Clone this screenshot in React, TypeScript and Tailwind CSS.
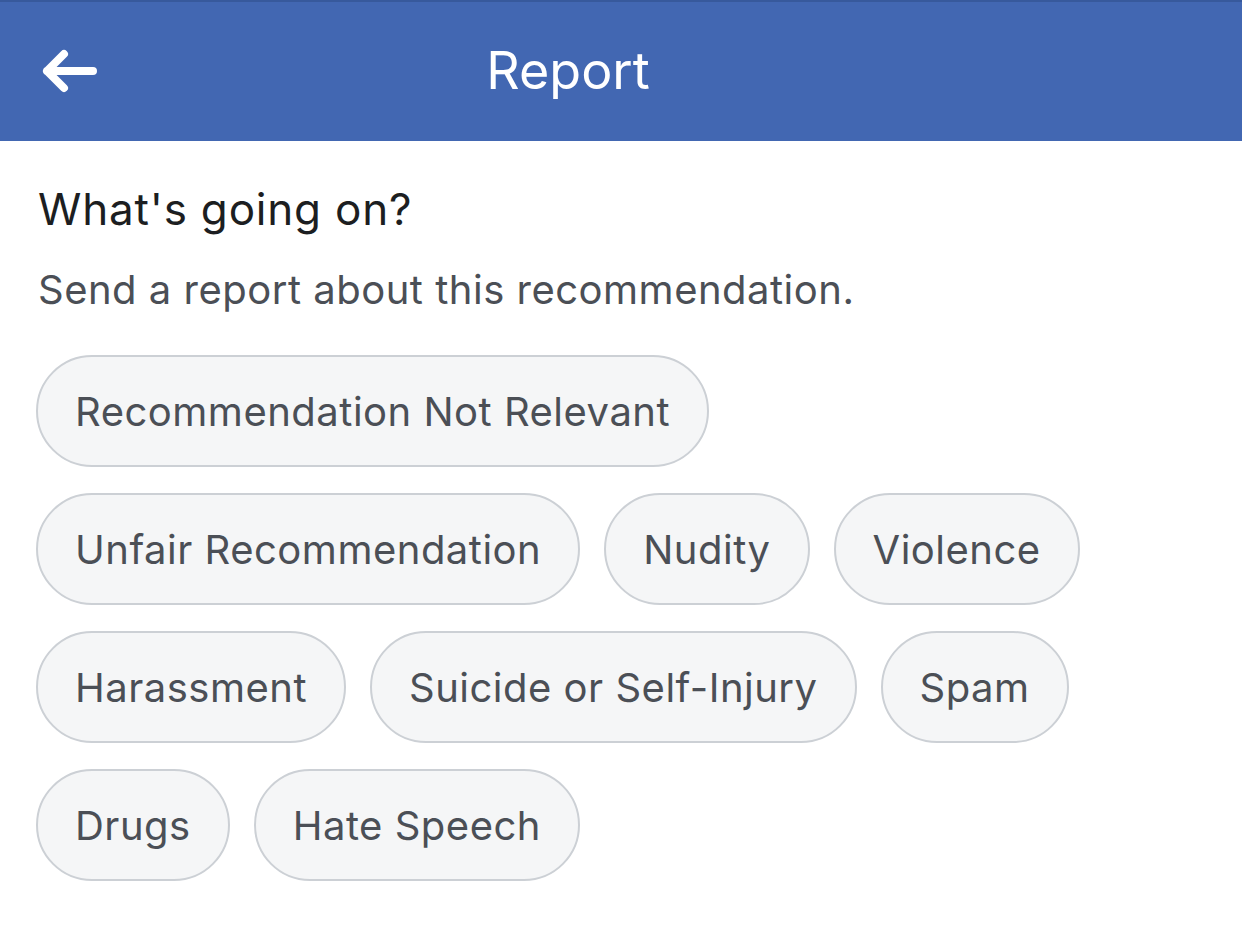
const reasons = [
  "Recommendation Not Relevant",
  "Unfair Recommendation",
  "Nudity",
  "Violence",
  "Harassment",
  "Suicide or Self-Injury",
  "Spam",
  "Drugs",
  "Hate Speech",
];

function BackArrow() {
  return (
    <svg width="60" height="50" viewBox="0 0 60 50" fill="none">
      <path
        d="M53 23H7M24 6L7 23L24 40"
        stroke="white"
        strokeWidth="8"
        strokeLinecap="round"
        strokeLinejoin="round"
      />
    </svg>
  );
}

export default function App() {
  return (
    <div className="min-h-screen w-[1242px] bg-white font-['Inter','Liberation_Sans',sans-serif]">
      {/* Header */}
      <div className="relative flex h-[141px] items-center border-t-2 border-[#37599c] bg-[#4267b2]">
        <div className="pl-[40px] pt-[2px]">
          <BackArrow />
        </div>
        <div className="absolute left-0 right-[106px] top-0 flex h-full items-center justify-center pb-[2px] text-[52px] text-white">
          Report
        </div>
      </div>

      {/* Body */}
      <div className="px-[36px] pt-[36px]">
        <h2 className="pl-[2px] text-[44px] leading-[64px] tracking-[0.8px] text-[#1c1e21]">What's going on?</h2>
        <p className="mt-[24px] pl-[2px] text-[40px] leading-[50px] tracking-[0.5px] text-[#4b4f56]">
          Send a report about this recommendation.
        </p>

        <div className="mt-[40px] flex max-w-[1060px] flex-wrap gap-x-[24px] gap-y-[26px]">
          {reasons.map((r) => (
            <button
              key={r}
              className="h-[112px] rounded-full border-2 border-[#ccd0d5] bg-[#f5f6f7] px-[37px] pt-[2px] text-[40px] tracking-[0.5px] text-[#4b4f56]"
            >
              {r}
            </button>
          ))}
        </div>
      </div>
    </div>
  );
}
